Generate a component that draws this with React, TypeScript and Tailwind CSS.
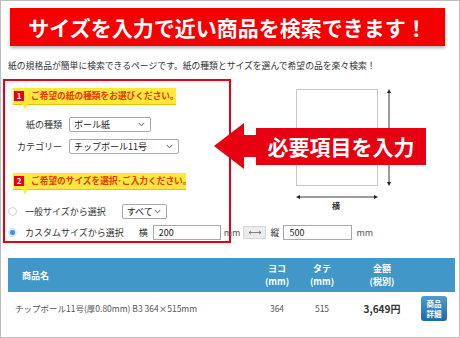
import React from "react";

const FONT = { fontFamily: '"Noto Sans CJK JP", "Noto Sans", sans-serif' };

function Chevron() {
  return (
    <svg width="7" height="5" viewBox="0 0 7 5" className="shrink-0">
      <path d="M0.8 1 L3.5 3.8 L6.2 1" fill="none" stroke="#555" strokeWidth="1" />
    </svg>
  );
}

function FakeSelect({ w, text }: { w: string; text: string }) {
  return (
    <div
      className={`${w} h-[15px] border border-[#a9a9a9] rounded-[2px] bg-white flex items-center justify-between pl-[4px] pr-[5px] text-[9px] text-[#222] leading-none`}
    >
      <span>{text}</span>
      <Chevron />
    </div>
  );
}

function YellowLabel({ n, text, w }: { n: string; text: string; w: string }) {
  return (
    <div className={`relative ${w} h-[16px] bg-[#ffe73c] flex items-center pl-[1px] shadow-[0_1px_0_#e8c400]`}>
      <div className="w-[10px] h-[10px] shrink-0 bg-[#e60012] text-white text-[8px] font-bold leading-none flex items-center justify-center">
        {n}
      </div>
      <span className="ml-[7px] text-[8.7px] font-bold text-[#e8380d] leading-none whitespace-nowrap">{text}</span>
      <div className="absolute left-[9px] top-[16px] w-0 h-0 border-l-[3px] border-r-[3px] border-t-[5px] border-l-transparent border-r-transparent border-t-[#ffe73c]" />
    </div>
  );
}

export default function App() {
  return (
    <div
      style={FONT}
      className="relative w-[460px] h-[338px] border border-[#bdbdbd] bg-white overflow-hidden text-[#333]"
    >
      {/* Banner */}
      <div className="mt-[7px] ml-[9px] w-[435px] h-[38px] bg-[#f40000] shadow-[0_2px_3px_rgba(0,0,0,0.3)] flex items-center justify-center">
        <span className="text-white font-bold text-[21px] leading-none tracking-[0px]">
          サイズを入力で近い商品を検索できます！
        </span>
      </div>

      {/* Description */}
      <div className="mt-[14px] ml-[7px] text-[8.8px] leading-[12px] text-[#333] whitespace-nowrap">
        紙の規格品が簡単に検索できるページです。紙の種類とサイズを選んで希望の品を楽々検索！
      </div>

      {/* Middle */}
      <div className="mt-[7px] flex">
        <div className="ml-[2px] w-[228px] h-[164px] border-2 border-[#e60012] shrink-0 flex flex-col">
          <div className="ml-[8px] mt-[7px]">
            <YellowLabel n="1" text="ご希望の紙の種類をお選びください。" w="w-[163px]" />
          </div>
          <div className="mt-[13px] flex items-center">
            <div className="w-[57px] text-right text-[9px] leading-none">紙の種類</div>
            <div className="ml-[7px]">
              <FakeSelect w="w-[82px]" text="ボール紙" />
            </div>
          </div>
          <div className="mt-[7px] flex items-center">
            <div className="w-[57px] text-right text-[9px] leading-none">カテゴリー</div>
            <div className="ml-[7px]">
              <FakeSelect w="w-[110px]" text="チップボール11号" />
            </div>
          </div>
          <div className="ml-[8px] mt-[19px]">
            <YellowLabel n="2" text="ご希望のサイズを選択･ご入力ください。" w="w-[173px]" />
          </div>
          <div className="mt-[15px] flex items-center h-[14px]">
            <div className="ml-[3px] w-[9px] h-[9px] shrink-0 rounded-full border border-[#d0d0d0] bg-white" />
            <span className="ml-[8px] text-[9px] leading-none">一般サイズから選択</span>
            <div className="ml-[16px]">
              <FakeSelect w="w-[45px]" text="すべて" />
            </div>
          </div>
          <div className="mt-[7px] flex items-center h-[15px] whitespace-nowrap">
            <div className="ml-[3px] w-[9px] h-[9px] shrink-0 rounded-full bg-[#3d8ee6] border-[2px] border-[#d6e8fb]" />
            <span className="ml-[8px] text-[9px] leading-none">カスタムサイズから選択</span>
            <span className="ml-[15px] text-[9px] leading-none">横</span>
            <div className="ml-[5px] w-[68px] h-[15px] border border-[#a9a9a9] bg-white flex items-center pl-[5px] text-[9px] leading-none text-[#222] shrink-0">
              200
            </div>
            <span className="ml-[3px] text-[9px] leading-none text-[#555]">mm</span>
            <div className="ml-[3px] w-[23px] h-[13px] bg-[#ececec] border border-[#d6d6d6] flex items-center justify-center shrink-0">
              <svg width="14" height="5" viewBox="0 0 14 5">
                <path d="M1 2.5 H13" stroke="#666" strokeWidth="0.8" />
                <path d="M3 0.8 L1 2.5 L3 4.2 M11 0.8 L13 2.5 L11 4.2" fill="none" stroke="#666" strokeWidth="0.8" />
              </svg>
            </div>
            <span className="ml-[4px] text-[9px] leading-none">縦</span>
            <div className="ml-[4px] w-[69px] h-[15px] border border-[#a9a9a9] bg-white flex items-center pl-[5px] text-[9px] leading-none text-[#222] shrink-0">
              500
            </div>
            <span className="ml-[4px] text-[9px] leading-none text-[#555]">mm</span>
          </div>
        </div>

        {/* Illustration */}
        <div className="ml-[63px] mt-[8px] flex flex-col items-start">
          <svg width="104" height="114" viewBox="0 0 104 114">
            <rect x="2.5" y="2.5" width="81" height="96" fill="white" stroke="#c8c8c8" strokeWidth="1" />
            <path d="M95 4 V97" stroke="#222" strokeWidth="0.9" />
            <path d="M93 6 L95 2 L97 6 Z M93 95 L95 99 L97 95 Z" fill="#222" />
            <path d="M4 110 H82" stroke="#222" strokeWidth="0.9" />
            <path d="M6 108 L2 110 L6 112 Z M80 108 L84 110 L80 112 Z" fill="#222" />
          </svg>
          <div className="ml-[38px] mt-[1px] text-[8px] leading-none font-bold text-[#333]">横</div>
        </div>
      </div>

      {/* Callout arrow */}
      <div className="absolute left-[212px] top-[121px] flex items-center">
        <svg width="44" height="48" viewBox="0 0 44 48" className="shrink-0">
          <polygon points="1,24 31,1 31,13 44,13 44,35 31,35 31,47" fill="#e60012" />
        </svg>
        <div className="w-[170px] h-[37px] bg-[#e60012] flex items-center justify-center -ml-[1px]">
          <span className="text-white font-bold text-[21px] leading-none">必要項目を入力</span>
        </div>
      </div>

      {/* Table */}
      <div className="mt-[15px] ml-[7px] w-[447px]">
        <div className="h-[34px] bg-[#4198c8] grid grid-cols-[247px_44px_46px_74px_36px] items-center text-white font-bold text-[9px] leading-[13px]">
          <div className="pl-[14px]">商品名</div>
          <div className="text-center">ヨコ<br />(mm)</div>
          <div className="text-center">タテ<br />(mm)</div>
          <div className="text-center">金額<br />(税別)</div>
          <div />
        </div>
        <div className="h-[33px] grid grid-cols-[247px_44px_46px_74px_36px] items-center text-[8.5px] text-[#555] leading-none">
          <div className="pl-[7px] whitespace-nowrap">チップボール11号(厚0.80mm) B3 364×515mm</div>
          <div className="text-center">364</div>
          <div className="text-center">515</div>
          <div className="text-center font-bold text-[10px] text-[#333]">3,649円</div>
          <div className="pl-[2px]">
            <div className="w-[26px] h-[25px] rounded-[3px] bg-gradient-to-b from-[#4a9fd4] to-[#1b6aa6] flex flex-col items-center justify-center text-white font-bold text-[7.5px] leading-[10px]">
              <span>商品</span>
              <span>詳細</span>
            </div>
          </div>
        </div>
      </div>
    </div>
  );
}
